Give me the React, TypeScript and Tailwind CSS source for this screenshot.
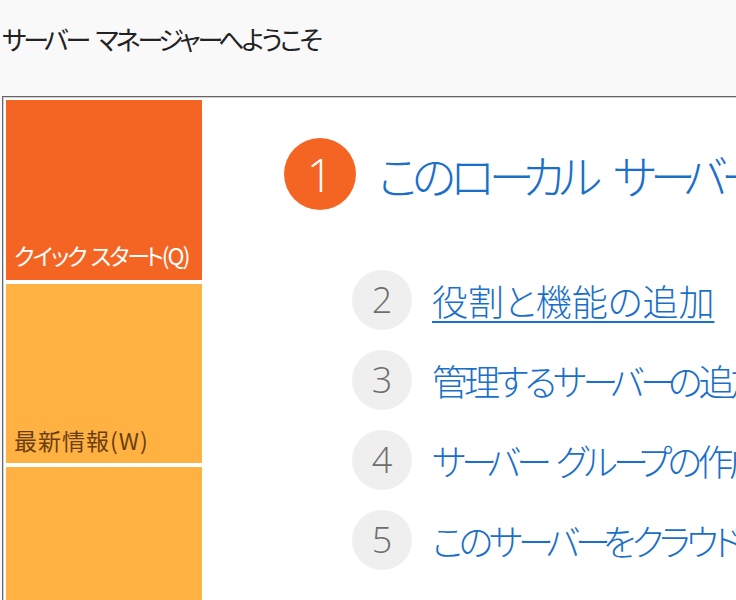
import React from "react";

const jp = "[font-family:'Noto_Sans_CJK_JP','Noto_Sans',sans-serif] [font-feature-settings:'palt']";

function fit(text: string, dashCls: string, spaceCls: string) {
  return text.split(/(ー| )/).map((p, i) => {
    if (p === "ー")
      return (
        <span key={i} className={dashCls}>
          ー
        </span>
      );
    if (p === " ")
      return (
        <span key={i} className={spaceCls}>
          {" "}
        </span>
      );
    return <React.Fragment key={i}>{p}</React.Fragment>;
  });
}

function Step({
  n,
  text,
  cls,
  dashCls,
  underline,
}: {
  n: string;
  text: string;
  cls: string;
  dashCls: string;
  underline?: boolean;
}) {
  return (
    <div className="flex items-center gap-[20px]">
      <div className="w-[60px] h-[60px] shrink-0 rounded-full bg-[#efefef] flex items-center justify-center">
        <span className="text-[36px] leading-none font-light text-[#6e6e6e] [font-family:'Open_Sans',sans-serif]">
          {n}
        </span>
      </div>
      <span
        className={`${jp} ${cls} whitespace-nowrap text-[36px] leading-[44px] font-light text-[#1a6fc9] ${
          underline ? "underline decoration-[1.5px] underline-offset-[5px]" : ""
        }`}
      >
        {fit(text, dashCls, "inline-block w-[14px]")}
      </span>
    </div>
  );
}

export default function App() {
  return (
    <div className="w-[736px] h-[600px] overflow-hidden bg-[#f9f9f9] flex flex-col">
      <div className="h-[96px] shrink-0 pl-[2px] pt-[22px]">
        <h1
          className={`${jp} text-[26px] leading-[34px] font-normal tracking-[-3px] text-[#222222] whitespace-nowrap`}
        >
          {fit("サーバー マネージャーへようこそ", "tracking-[-5px]", "inline-block w-[9px]")}
        </h1>
      </div>
      <div className="flex-1 ml-[2px] w-[900px] border-t border-l border-[#666666] bg-white">
        <div className="h-full border-t border-l border-[#cfcfcf] p-[2px] flex">
          <div className="w-[196px] shrink-0 flex flex-col gap-[4px]">
            <div className="h-[180px] bg-[#f46524] flex items-end pl-[8px] pb-[10px]">
              <span className={`${jp} text-[23px] leading-[30px] tracking-[-2px] text-white whitespace-nowrap`}>
                {fit("クイック スタート(Q)", "tracking-[-4px]", "inline-block w-[5px]")}
              </span>
            </div>
            <div className="h-[179px] bg-[#ffb142] flex items-end pl-[8px] pb-[8px]">
              <span className={`${jp} text-[23px] leading-[30px] tracking-[1px] text-[#6b3e12] whitespace-nowrap`}>
                最新情報(W)
              </span>
            </div>
            <div className="h-[180px] bg-[#ffb142]" />
          </div>
          <div className="flex-1 pl-[82px] pt-[38px]">
            <div className="flex items-center gap-[22px]">
              <div className="w-[72px] h-[72px] shrink-0 rounded-full bg-[#f46524] flex items-center justify-center">
                <span className="text-[46px] leading-none font-light text-white [font-family:'Open_Sans',sans-serif]">
                  1
                </span>
              </div>
              <span
                className={`${jp} whitespace-nowrap text-[46px] leading-[56px] font-light tracking-[-6px] text-[#1a6fc9]`}
              >
                {fit("このローカル サーバーの構成", "tracking-[-12px]", "inline-block w-[17px]")}
              </span>
            </div>
            <div className="mt-[60px] pl-[68px] flex flex-col gap-[20px]">
              <Step n="2" text="役割と機能の追加" cls="tracking-[0px]" dashCls="tracking-[0px]" underline />
              <Step n="3" text="管理するサーバーの追加" cls="tracking-[-4px]" dashCls="tracking-[-8px]" />
              <Step n="4" text="サーバー グループの作成" cls="tracking-[-4.5px]" dashCls="tracking-[-10px]" />
              <Step
                n="5"
                text="このサーバーをクラウド サービスに接続する"
                cls="tracking-[-4.5px]"
                dashCls="tracking-[-8px]"
              />
            </div>
          </div>
        </div>
      </div>
    </div>
  );
}
